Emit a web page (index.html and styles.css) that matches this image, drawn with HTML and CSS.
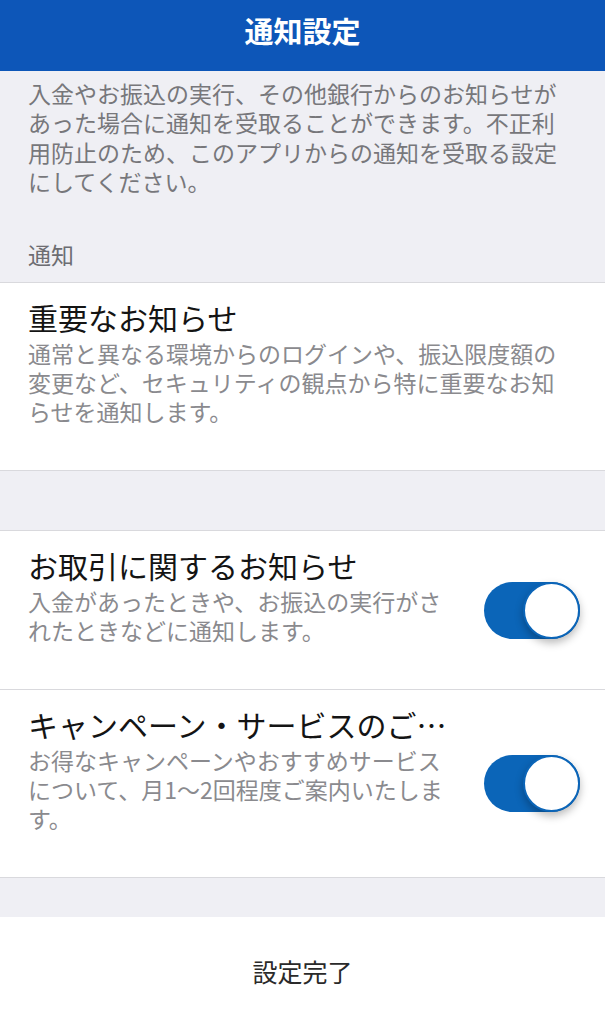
FILE: index.html
```html
<!DOCTYPE html>
<html lang="ja">
<head>
<meta charset="utf-8">
<title>通知設定</title>
<link rel="stylesheet" href="styles.css">
</head>
<body>
<div class="page">
  <header class="nav">
    <h1 class="nav-title">通知設定</h1>
  </header>

  <section class="intro">
    <p class="intro-text">入金やお振込の実行、その他銀行からのお知らせがあった場合に通知を受取ることができます。不正利用防止のため、このアプリからの通知を受取る設定にしてください。</p>
    <div class="section-label">通知</div>
  </section>

  <div class="group">
    <div class="row">
      <div class="row-text">
        <div class="row-title">重要なお知らせ</div>
        <div class="row-desc wide">通常と異なる環境からのログインや、振込限度額の変更など、セキュリティの観点から特に重要なお知らせを通知します。</div>
      </div>
    </div>
  </div>

  <div class="gap"></div>

  <div class="group">
    <div class="row">
      <div class="row-text narrow">
        <div class="row-title">お取引に関するお知らせ</div>
        <div class="row-desc">入金があったときや、お振込の実行がされたときなどに通知します。</div>
      </div>
      <div class="toggle on"><span class="knob"></span></div>
    </div>
    <div class="row">
      <div class="row-text narrow">
        <div class="row-title truncate">キャンペーン・サービスのご案内</div>
        <div class="row-desc">お得なキャンペーンやおすすめサービスについて、月1〜2回程度ご案内いたします。</div>
      </div>
      <div class="toggle on"><span class="knob"></span></div>
    </div>
  </div>

  <div class="gap small"></div>

  <footer class="footer">
    <button class="done" type="button">設定完了</button>
  </footer>
</div>
</body>
</html>
```

FILE: styles.css
```css
html, body {
  margin: 0;
  padding: 0;
}

body {
  background: #ffffff;
  font-family: "Noto Sans CJK JP", "Noto Sans", "Liberation Sans", sans-serif;
  -webkit-font-smoothing: antialiased;
}

.page {
  width: 605px;
  height: 1024px;
  display: flex;
  flex-direction: column;
  overflow: hidden;
}

.nav {
  height: 71px;
  background: #0d56b8;
  display: flex;
  justify-content: center;
  align-items: flex-start;
  padding-top: 12px;
  box-sizing: border-box;
}

.nav-title {
  margin: 0;
  color: #ffffff;
  font-size: 29px;
  line-height: 36px;
  font-weight: 700;
}

.intro {
  background: #efeff4;
  padding: 8px 28px 13px;
}

.intro-text {
  margin: 0;
  font-size: 23px;
  line-height: 29.3px;
  color: #77777b;
}

.section-label {
  margin-top: 44px;
  font-size: 23px;
  line-height: 29px;
  color: #6d6d72;
}

.group {
  background: #ffffff;
  border-top: 1px solid #d9d9dd;
}

.row {
  display: flex;
  align-items: center;
  padding: 16px 25px 44px 28px;
  border-bottom: 1px solid #d9d9dd;
}

.row-text {
  flex: 1;
  min-width: 0;
}

.row-text.narrow {
  flex: 0 0 422px;
  margin-right: 34px;
}

.row-title {
  font-size: 30px;
  line-height: 36px;
  color: #141414;
  white-space: nowrap;
}

.row-title.truncate {
  overflow: hidden;
  text-overflow: ellipsis;
}

.row-desc {
  margin-top: 4px;
  font-size: 23px;
  line-height: 29px;
  color: #8a8a8e;
}

.row-desc.wide {
  padding-right: 4px;
}

.toggle {
  width: 96px;
  height: 57px;
  border-radius: 29px;
  background: #0b65b8;
  display: flex;
  justify-content: flex-end;
  align-items: center;
  margin-top: 28px;
  flex-shrink: 0;
}

.knob {
  width: 57px;
  height: 57px;
  border-radius: 50%;
  background: #ffffff;
  border: 2px solid #0b65b8;
  box-sizing: border-box;
  box-shadow: 0 4px 8px rgba(0, 0, 0, 0.28);
}

.gap {
  height: 59px;
  background: #efeff4;
}

.gap.small {
  height: 39px;
}

.footer {
  flex: 1;
  background: #ffffff;
  display: flex;
  justify-content: center;
  align-items: center;
}

.done {
  border: none;
  background: transparent;
  font-family: inherit;
  font-size: 25px;
  line-height: 32px;
  color: #2a2a2a;
  padding: 0;
}
```
